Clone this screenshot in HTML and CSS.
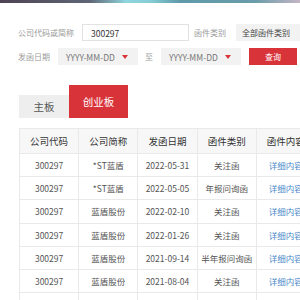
FILE: index.html
```html
<!DOCTYPE html>
<html lang="zh-CN">
<head>
    <meta charset="UTF-8">
    <meta name="viewport" content="width=device-width, initial-scale=1.0">
    <title>问询函件</title>
    <link rel="stylesheet" href="styles.css">
</head>
<body>
    <div class="top-strip"></div>

    <form class="search-form">
        <div class="form-row">
            <label class="form-label">公司代码或简称</label>
            <input type="text" class="form-input" value="300297">
            <label class="form-label type-label">函件类别</label>
            <div class="form-select type-select">全部函件类别</div>
        </div>
        <div class="form-row">
            <label class="form-label">发函日期</label>
            <div class="form-select date-select">YYYY-MM-DD<span class="caret"></span></div>
            <span class="to-label">至</span>
            <div class="form-select date-select">YYYY-MM-DD<span class="caret"></span></div>
            <button type="button" class="search-btn">查询</button>
        </div>
    </form>

    <div class="board-tabs">
        <div class="tab">主板</div>
        <div class="tab tab-active">创业板</div>
    </div>

    <table class="letter-table">
        <thead>
            <tr>
                <th>公司代码</th>
                <th>公司简称</th>
                <th>发函日期</th>
                <th>函件类别</th>
                <th>函件内容</th>
            </tr>
        </thead>
        <tbody>
            <tr><td>300297</td><td>*ST蓝盾</td><td>2022-05-31</td><td>关注函</td><td><a href="#" class="detail-link">详细内容</a></td></tr>
            <tr><td>300297</td><td>*ST蓝盾</td><td>2022-05-05</td><td>年报问询函</td><td><a href="#" class="detail-link">详细内容</a></td></tr>
            <tr><td>300297</td><td>蓝盾股份</td><td>2022-02-10</td><td>关注函</td><td><a href="#" class="detail-link">详细内容</a></td></tr>
            <tr><td>300297</td><td>蓝盾股份</td><td>2022-01-26</td><td>关注函</td><td><a href="#" class="detail-link">详细内容</a></td></tr>
            <tr><td>300297</td><td>蓝盾股份</td><td>2021-09-14</td><td>半年报问询函</td><td><a href="#" class="detail-link">详细内容</a></td></tr>
            <tr><td>300297</td><td>蓝盾股份</td><td>2021-08-04</td><td>关注函</td><td><a href="#" class="detail-link">详细内容</a></td></tr>
            <tr><td>300297</td><td>蓝盾股份</td><td>2021-06-18</td><td>关注函</td><td><a href="#" class="detail-link">详细内容</a></td></tr>
        </tbody>
    </table>
</body>
</html>
```

FILE: styles.css
```css
* {
    box-sizing: border-box;
}

body {
    margin: 0;
    width: 300px;
    height: 300px;
    overflow: hidden;
    background: #ffffff;
    color: #333333;
    font-family: "Noto Sans CJK SC", "Noto Sans", sans-serif;
}

.top-strip {
    height: 3px;
    background: linear-gradient(90deg, #4d4355 0%, #5f6676 30%, #8fd6de 42%, #86cdd6 50%, #5f9aaa 60%, #6a9caa 85%, #c4b6c6 100%);
}

.search-form {
    display: flex;
    flex-direction: column;
    gap: 7px;
    padding: 21px 0 0 18px;
}

.form-row {
    display: flex;
    align-items: center;
    height: 17px;
    white-space: nowrap;
}

.form-label {
    font-size: 8px;
    color: #9a9a9a;
    margin-right: 8px;
}

.type-label {
    margin-left: 5px;
    margin-right: 10px;
}

.form-input {
    width: 107px;
    height: 17px;
    padding: 0 8px;
    border: 1px solid #e2e2e2;
    font-family: inherit;
    font-size: 8.5px;
    color: #333333;
    outline: none;
}

.form-select {
    height: 17px;
    background: #f2f2f2;
    font-size: 8px;
    color: #444444;
    display: flex;
    align-items: center;
    flex-shrink: 0;
}

.type-select {
    width: 70px;
    padding-left: 6px;
}

.date-select {
    width: 80px;
    padding-left: 8px;
    color: #777777;
    font-size: 8.5px;
}

.caret {
    margin-left: 7px;
    width: 0;
    height: 0;
    border-left: 3.5px solid transparent;
    border-right: 3.5px solid transparent;
    border-top: 4px solid #d9333a;
}

.to-label {
    font-size: 8px;
    color: #9a9a9a;
    margin: 0 8px 0 7px;
}

.search-btn {
    margin-left: 8px;
    width: 48px;
    height: 17px;
    border: none;
    background: #d9333a;
    color: #ffffff;
    font-family: inherit;
    font-size: 8px;
    padding: 0;
}

.board-tabs {
    display: flex;
    align-items: flex-end;
    margin: 20px 0 0 19px;
    height: 33px;
}

.tab {
    width: 50px;
    height: 23px;
    background: #eeeeee;
    color: #555555;
    font-size: 10.5px;
    display: flex;
    align-items: center;
    justify-content: center;
}

.tab-active {
    width: 59px;
    height: 33px;
    background: #d9333a;
    color: #ffffff;
}

.letter-table {
    margin: 10px 0 0 19px;
    border-collapse: collapse;
    table-layout: fixed;
    width: 297px;
}

.letter-table th,
.letter-table td {
    border: 1px solid #e9e9e9;
    text-align: center;
    padding: 0;
    white-space: nowrap;
    overflow: hidden;
}

.letter-table th {
    height: 25px;
    background: #f7f7f7;
    font-weight: normal;
    font-size: 9.5px;
    color: #333333;
}

.letter-table td {
    height: 23.2px;
    font-size: 8.5px;
    color: #555555;
}

.detail-link {
    color: #4a87c9;
    text-decoration: none;
}
```
